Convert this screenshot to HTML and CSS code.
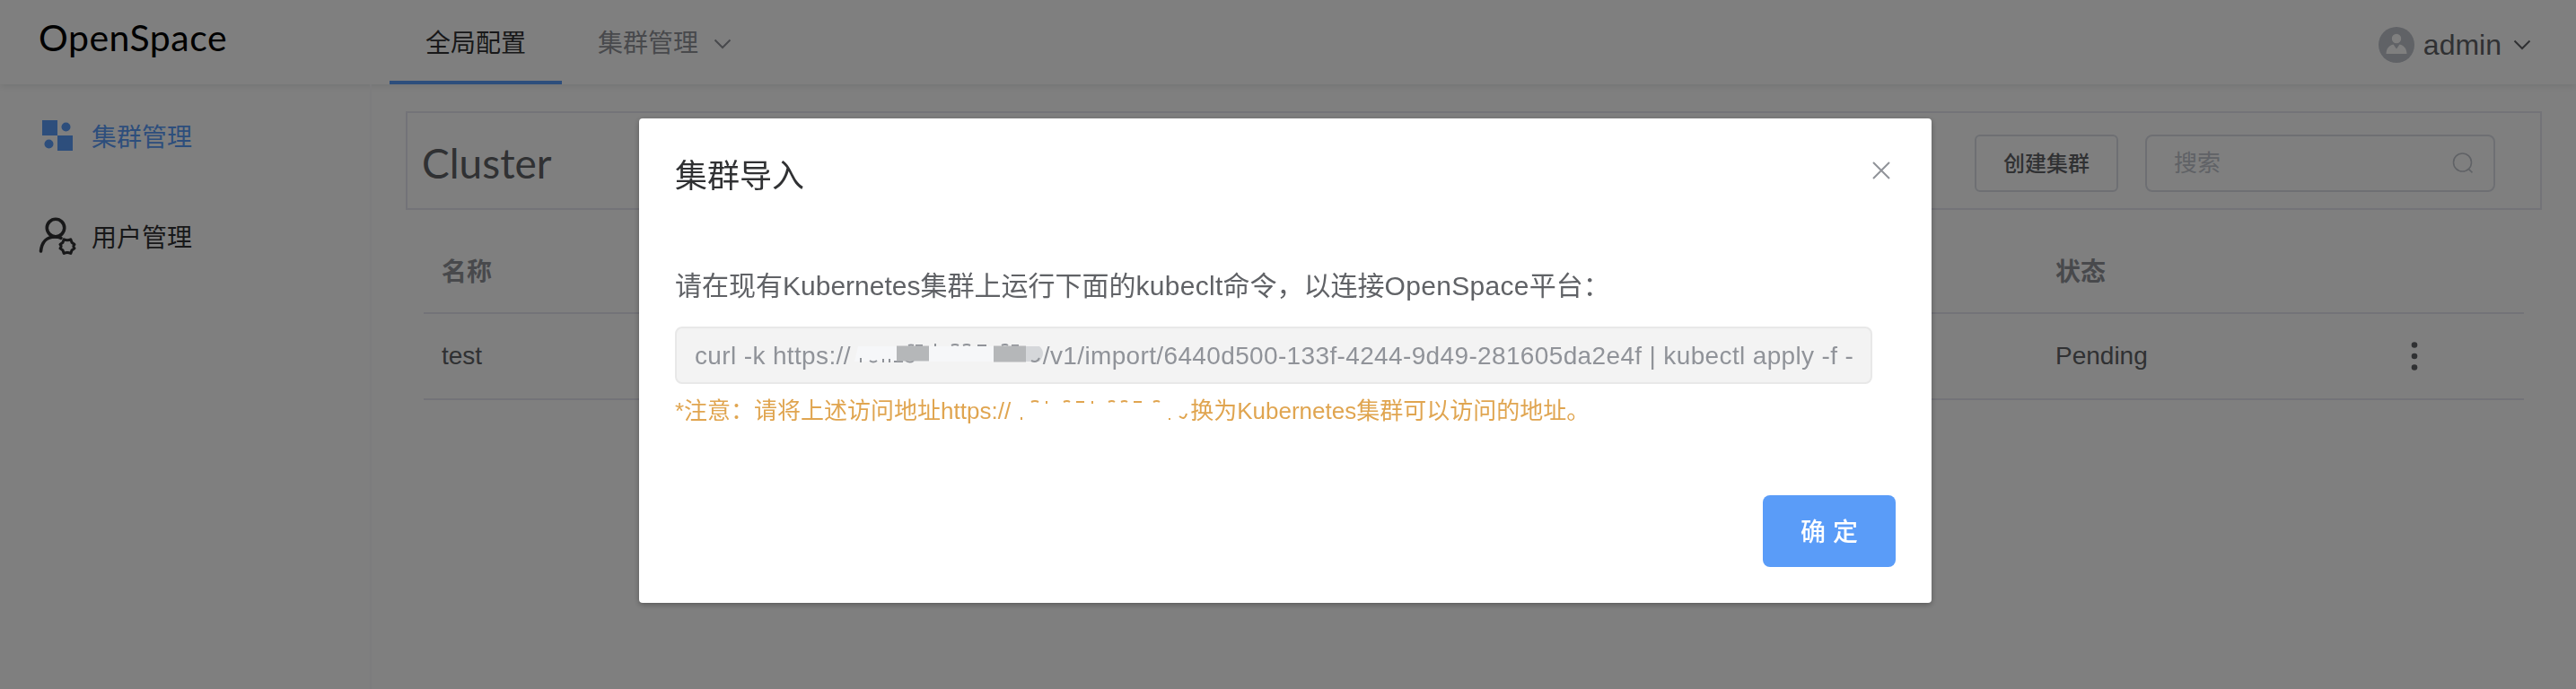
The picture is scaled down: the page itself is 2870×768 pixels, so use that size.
FILE: index.html
```
<!DOCTYPE html>
<html lang="zh-CN">
<head>
<meta charset="utf-8">
<title>OpenSpace</title>
<link rel="stylesheet" href="styles.css">
</head>
<body>
<div class="app">
  <header class="header">
    <div class="logo">OpenSpace</div>
    <nav class="tabs">
      <a class="tab tab-active">全局配置</a>
      <a class="tab">集群管理
        <svg class="chevron" width="20" height="12" viewBox="0 0 20 12"><path d="M1.5 1.5 10 10l8.500-8.500"/></svg>
      </a>
    </nav>
    <div class="user">
      <svg class="avatar" width="40" height="40" viewBox="0 0 40 40"><circle cx="20" cy="20" r="20" fill="#c0c4cc"/><circle cx="20" cy="13" r="5.200" fill="#fff"/><path d="M8.500 30c.2-6 3.300-9.500 8-10.500l3.500 5 3.500-5c4.700 1 7.800 4.500 8 10.500z" fill="#fff"/></svg>
      <span class="user-name">admin</span>
      <svg class="chevron chevron-dark" width="20" height="12" viewBox="0 0 20 12"><path d="M1.500 1.500 10 10l8.500-8.500"/></svg>
    </div>
  </header>
  <div class="body">
    <aside class="sidebar">
      <a class="side-item side-active">
        <svg class="side-icon" width="44" height="44" viewBox="0 0 44 44" fill="#5a9cf8"><path d="M5 4h17v17H5zM22 21h17v17H22z"/><circle cx="31.500" cy="11.500" r="5"/><circle cx="12.500" cy="30.500" r="5"/></svg>
        <span>集群管理</span>
      </a>
      <a class="side-item">
        <svg class="side-icon" width="44" height="44" viewBox="0 0 44 44" fill="none" stroke="#303133" stroke-width="3.600" stroke-linecap="round" stroke-linejoin="round"><circle cx="20" cy="12" r="9.700"/><path d="M3.500 38C4.500 28 10 22 19 22c3 0 5 .3 7 1.300"/><path stroke-width="3" d="M29.200 24.800q3.800 1.900 7.600 0l1.200 3.400 3 2.300q-2.300 2 0 4.300l-3 2.100-1.200 3.500q-3.800-2-7.600 0L28 36.900l-3-2.100q2.300-2.300 0-4.300l3-2.300z"/></svg>
        <span>用户管理</span>
      </a>
    </aside>
    <main class="main">
      <section class="toolbar">
        <h1 class="page-title">Cluster</h1>
        <button class="create">创建集群</button>
        <div class="search">
          <span>搜索</span>
          <svg width="24" height="24" viewBox="0 0 24 24" fill="none" stroke="#c0c4cc" stroke-width="1.600"><circle cx="11.500" cy="11" r="10"/><path d="m18.300 18.300 4.200 4"/></svg>
        </div>
      </section>
      <section class="table">
        <div class="row row-head"><span>名称</span><span>状态</span><span></span></div>
        <div class="row"><span>test</span><span>Pending</span>
          <svg class="more" width="8" height="34" viewBox="0 0 8 34" fill="#606266"><circle cx="4" cy="4.500" r="3.300"/><circle cx="4" cy="17" r="3.300"/><circle cx="4" cy="29.500" r="3.300"/></svg>
        </div>
      </section>
    </main>
  </div>
</div>
<div class="mask">
  <div class="dialog">
    <div class="dialog-head">
      <h2 class="dialog-title">集群导入</h2>
      <svg width="20" height="20" viewBox="0 0 20 20" fill="none" stroke="#909399" stroke-width="2"><path d="m1 1 18 18M19 1 1 19"/></svg>
    </div>
    <p class="message">请在现有Kubernetes集群上运行下面的<span class="message-mid">kubeclt</span>命令，以连接<span class="message-mid">OpenSpace</span>平台：</p>
    <div class="command">
      <span>curl -k https://</span>
      <svg class="hidden-host" width="214" height="30" viewBox="0 0 214 30">
        <path d="M8 4h194q10 8 0 17H4z" fill="#f6f7f9"/>
        <g fill="none" stroke="#909399" stroke-width="2"><path d="M11 17v5M21 20q4 3 8 0M36 18v4M43 18v4M48 21h10M61 20q5 3 9 0M64 3q3-1 6 0M72 3h8M94 1v3M112 3q4-2 8 0M125 3q4-2 8 0M141 3h10M168 3q4-2 7 0M179 3h8"/></g>
        <path d="M51 3.500h36v17H51zM159 3.500h36v18h-36z" fill="#b5b7b9"/>
        <path d="M195 4h15q8 7 0 17h-15z" fill="#d5d7da"/>
        <path d="M201 20q6 3 9-3" fill="none" stroke="#909399" stroke-width="2"/>
      </svg>
      <span class="command-tail">/v1/import/6440d500-133f-4244-9d49-281605da2e4f | kubectl apply -f -</span>
    </div>
    <p class="note"><span>*注意：请将上述访问地址https://</span>
      <svg class="hidden-host" width="200" height="28" viewBox="0 0 200 28" fill="none" stroke="#e0a550" stroke-width="2"><path d="M12 21v3M23 4q4-2 8 0M40 3v3M59 4q4-2 7 0M73 4h9M91 3v3M109 4q4-2 7 0M123 4q4-2 7 0M137 4h9M159 4q4-2 7 0M177 22v2M188 20q6 5 8-3"/></svg>
      <span>换为Kubernetes集群可以访问的地址。</span></p>
    <div class="dialog-foot"><button class="confirm">确 定</button></div>
  </div>
</div>
</body>
</html>
```
FILE: styles.css
```
* { box-sizing: border-box; }
body {
  margin: 0;
  background: #fff;
  color: #606266;
  font-family: "Liberation Sans", "Noto Sans CJK SC", sans-serif;
  font-size: 28px;
  line-height: 1;
}
h1, h2, p { margin: 0; font-weight: 400; }
button { font-family: inherit; line-height: 1; }
.app { height: 768px; overflow: hidden; display: flex; flex-direction: column; }
.header {
  flex: none;
  height: 94px;
  display: flex;
  box-shadow: 0 2px 8px rgba(0, 30, 20, .1);
}
.logo {
  width: 434px;
  padding: 21px 0 0 43px;
  font-family: Lato, sans-serif;
  font-size: 41px;
  letter-spacing: .5px;
  color: #000;
}
.tabs { display: flex; flex: 1; }
.tab {
  height: 94px;
  padding: 8px 40px 0;
  display: flex;
  align-items: center;
  gap: 17px;
  color: #909399;
  border-bottom: 4px solid transparent;
}
.tab-active { border-color: #5a9cf8; color: #303133; }
.chevron { fill: none; stroke: #909399; stroke-width: 2; }
.chevron-dark { stroke: #606266; }
.user {
  display: flex;
  align-items: center;
  padding: 6px 50px 0 0;
  font-size: 32px;
}
.user-name { margin: 0 13px 0 10px; }
.body { flex: 1; display: flex; }
.sidebar { width: 414px; padding-top: 4px; border-right: 2px solid #f8f9fb; }
.side-item {
  height: 112px;
  padding-left: 42px;
  display: flex;
  align-items: center;
  gap: 16px;
  color: #303133;
}
.side-icon { margin-top: -5px; }
.side-active { color: #5a9cf8; }
.main { flex: 1; padding: 30px 38px; }
.toolbar {
  height: 110px;
  border: 2px solid #e6e6f0;
  display: flex;
  align-items: center;
  padding: 0 50px 0 16px;
}
.page-title {
  flex: 1;
  padding-top: 5px;
  font-family: Lato, sans-serif;
  font-size: 46px;
}
.create {
  width: 160px;
  height: 64px;
  margin: 6px 30px 0 0;
  padding: 1px 0 0;
  border: 2px solid #dcdfe6;
  border-radius: 6px;
  background: #fff;
  color: #606266;
  font-size: 24px;
  font-weight: 500;
}
.search {
  width: 390px;
  height: 64px;
  margin-top: 6px;
  padding: 0 22px 0 30px;
  border: 2px solid #dcdfe6;
  border-radius: 8px;
  display: flex;
  align-items: center;
  justify-content: space-between;
  color: #c0c4cc;
  font-size: 26px;
}
.table { margin: 0 20px; }
.row {
  height: 96px;
  padding-left: 20px;
  border-bottom: 2px solid #e6e6f0;
  display: grid;
  grid-template-columns: 1798px 396px auto;
  align-items: center;
}
.row-head { height: 116px; padding-top: 25px; color: #909399; font-weight: 700; }
.mask {
  position: fixed;
  inset: 0;
  padding-top: 132px;
  display: flex;
  justify-content: center;
  align-items: flex-start;
  background: rgba(0, 0, 0, .5);
}
.dialog {
  width: 1440px;
  height: 540px;
  margin-right: 6px;
  padding: 40px;
  display: flex;
  flex-direction: column;
  background: #fff;
  border-radius: 4px;
  box-shadow: 0 2px 6px rgba(0, 0, 0, .3);
}
.dialog-head { display: flex; justify-content: space-between; padding: 7px 6px 0 0; }
.dialog-head svg { margin-top: 1px; }
.dialog-title { font-size: 36px; color: #303133; }
.message { margin-top: 86px; font-size: 30px; line-height: 36px; white-space: nowrap; }
.message-mid { letter-spacing: .3px; }
.command {
  width: 1334px;
  height: 64px;
  margin-top: 27px;
  padding: 2px 0 0 20px;
  display: flex;
  align-items: center;
  border: 2px solid #e8e8e8;
  border-radius: 8px;
  background: #f3f3f3;
  color: #909399;
  letter-spacing: .36px;
  white-space: nowrap;
}
.hidden-host { flex: none; }
.note {
  margin-top: 13px;
  display: flex;
  align-items: center;
  font-size: 26px;
  line-height: 34px;
  white-space: nowrap;
  color: #e0a550;
}
.dialog-foot { margin-top: auto; display: flex; justify-content: flex-end; }
.confirm {
  width: 148px;
  height: 80px;
  padding: 3px 0 0;
  border: 0;
  border-radius: 8px;
  background: #5a9cf8;
  color: #fff;
  font-size: 28px;
  font-weight: 500;
}
```
